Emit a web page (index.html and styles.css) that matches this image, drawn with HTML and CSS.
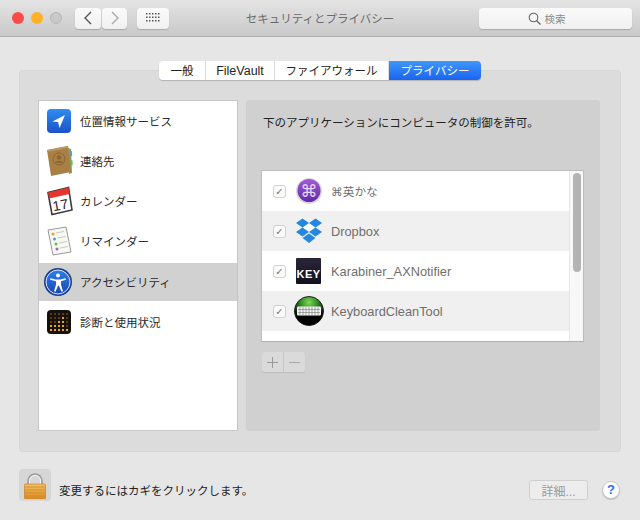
FILE: index.html
```html
<!DOCTYPE html>
<html lang="ja">
<head>
<meta charset="utf-8">
<title>セキュリティとプライバシー</title>
<link rel="stylesheet" href="styles.css">
</head>
<body>
<div class="window">
  <header class="titlebar">
    <div class="lights"><span class="light red"></span><span class="light amber"></span><span class="light off"></span></div>
    <div class="nav">
      <button class="tb-btn back"><svg width="10" height="14" viewBox="0 0 10 14"><path d="M8 1 2 7l6 6" fill="none" stroke="#555" stroke-width="1.4"/></svg></button>
      <button class="tb-btn fwd"><svg width="10" height="14" viewBox="0 0 10 14"><path d="M2 1l6 6-6 6" fill="none" stroke="#aaa" stroke-width="1.4"/></svg></button>
    </div>
    <button class="tb-btn grid"><svg width="14" height="10" viewBox="0 0 14 10" fill="#555"><rect x="0" y="0" width="1.5" height="1.5"/><rect x="3" y="0" width="1.5" height="1.5"/><rect x="6" y="0" width="1.5" height="1.5"/><rect x="9" y="0" width="1.5" height="1.5"/><rect x="12" y="0" width="1.5" height="1.5"/><rect x="0" y="3.5" width="1.5" height="1.5"/><rect x="3" y="3.5" width="1.5" height="1.5"/><rect x="6" y="3.5" width="1.5" height="1.5"/><rect x="9" y="3.5" width="1.5" height="1.5"/><rect x="12" y="3.5" width="1.5" height="1.5"/><rect x="0" y="7" width="1.5" height="1.5"/><rect x="3" y="7" width="1.5" height="1.5"/><rect x="6" y="7" width="1.5" height="1.5"/><rect x="9" y="7" width="1.5" height="1.5"/><rect x="12" y="7" width="1.5" height="1.5"/></svg></button>
    <div class="title">セキュリティとプライバシー</div>
    <div class="search"><svg width="13" height="13" viewBox="0 0 13 13"><circle cx="5.5" cy="5.5" r="4.3" fill="none" stroke="#666" stroke-width="1.1"/><path d="M8.7 8.7 12.5 12.5" stroke="#666" stroke-width="1.3"/></svg><span>検索</span></div>
  </header>

  <main class="content">
    <nav class="tabs">
      <span class="tab t1">一般</span>
      <span class="tab t2">FileVault</span>
      <span class="tab t3">ファイアウォール</span>
      <span class="tab t4 active">プライバシー</span>
    </nav>
    <section class="panel">
      <ul class="services">
        <li class="service">
          <svg class="sicon" width="26" height="26" viewBox="0 0 26 26"><defs><linearGradient id="gLoc" x1="0" y1="0" x2="0" y2="1"><stop offset="0" stop-color="#2f8df0"/><stop offset="1" stop-color="#1c52c8"/></linearGradient></defs><rect x="1" y="1" width="24" height="24" rx="4" fill="url(#gLoc)"/><path d="M19 7 6.500 13.500l5.600.6 1.400 5.900z" fill="#fff"/></svg>
          <span>位置情報サービス</span>
        </li>
        <li class="service">
          <svg class="sicon" width="28" height="32" viewBox="0 0 28 32"><path d="M22 3l3 1 1 24-3 1z" fill="#8a9a60"/><path d="M24 6l2 .3.200 5-2-.3z" fill="#5a9be0"/><path d="M24.500 15l2 .3.200 5-2-.3z" fill="#6cb84f"/><path d="M1 5 22 1l3 26-20 4z" fill="#a87f45"/><path d="M1 5 22 1l.3 2L2 7z" fill="#bc9560"/><circle cx="13" cy="14" r="6" fill="none" stroke="#8b6733" stroke-width="1"/><circle cx="13" cy="12.500" r="2.200" fill="#8b6733"/><path d="M9 18c1-3 7-3 8 0z" fill="#8b6733"/></svg>
          <span>連絡先</span>
        </li>
        <li class="service">
          <svg class="sicon" width="28" height="30" viewBox="0 0 28 30"><path d="M2 6.500 22.500 1.500l3.500 22.500-20 4.500z" fill="#fff" stroke="#3c3c3c" stroke-width="1.600"/><path d="M2 6.500 22.500 1.500l1 6.500L3.200 12.500z" fill="#e2362f"/><text x="14.500" y="24" class="calnum" text-anchor="middle" transform="rotate(-10 14 20)">17</text></svg>
          <span>カレンダー</span>
        </li>
        <li class="service">
          <svg class="sicon" width="26" height="30" viewBox="0 0 26 30"><path d="M2 4 20 1l5 25-18 3z" fill="#f8f8f2" stroke="#999" stroke-width="1"/><circle cx="7" cy="8" r="1.500" fill="#f0a030"/><circle cx="8.500" cy="13" r="1.500" fill="#4a9de8"/><circle cx="10" cy="18" r="1.500" fill="#5fbf50"/><circle cx="11" cy="23" r="1.500" fill="#a860d0"/><path d="M10 7l8-1.500M11.500 12l8-1.500M13 17l8-1.500M14 22l8-1.500" stroke="#bbb" stroke-width=".8"/></svg>
          <span>リマインダー</span>
        </li>
        <li class="service selected">
          <svg class="sicon big" width="30" height="30" viewBox="0 0 30 30"><defs><linearGradient id="gAcc" x1="0" y1="0" x2="0" y2="1"><stop offset="0" stop-color="#2f7fe8"/><stop offset="1" stop-color="#1746b8"/></linearGradient></defs><circle cx="15" cy="15" r="14" fill="#1b3f93"/><circle cx="15" cy="15" r="12" fill="url(#gAcc)" stroke="#dbe8fb" stroke-width="1"/><circle cx="15" cy="8.500" r="2" fill="#fff"/><path d="M7.500 11.300 12.500 12.500h5l5-1.200.400 1.500-4.900 1.500v3.500l2 6.500-1.500.4-2.500-6h-1l-2.500 6-1.500-.4 2-6.500v-3.500L7.100 12.800z" fill="#fff"/></svg>
          <span>アクセシビリティ</span>
        </li>
        <li class="service">
          <svg class="sicon" width="26" height="26" viewBox="0 0 26 26"><rect x="1" y="1" width="24" height="24" rx="4" fill="#17110c"/><g fill="#f0a01e"><rect x="4" y="20" width="2" height="2"/><rect x="8" y="20" width="2" height="2"/><rect x="12" y="20" width="2" height="2"/><rect x="16" y="20" width="2" height="2"/><rect x="20" y="20" width="2" height="2"/><rect x="4" y="16" width="2" height="2"/><rect x="8" y="16" width="2" height="2"/><rect x="12" y="16" width="2" height="2"/><rect x="16" y="16" width="2" height="2"/><rect x="12" y="12" width="2" height="2"/><rect x="16" y="12" width="2" height="2"/><rect x="16" y="8" width="2" height="2"/></g><g fill="#5a3a12"><rect x="4" y="12" width="2" height="2"/><rect x="8" y="12" width="2" height="2"/><rect x="20" y="12" width="2" height="2"/><rect x="20" y="16" width="2" height="2"/><rect x="4" y="8" width="2" height="2"/><rect x="8" y="8" width="2" height="2"/><rect x="12" y="8" width="2" height="2"/><rect x="20" y="8" width="2" height="2"/><rect x="4" y="4" width="2" height="2"/><rect x="8" y="4" width="2" height="2"/><rect x="12" y="4" width="2" height="2"/><rect x="16" y="4" width="2" height="2"/><rect x="20" y="4" width="2" height="2"/></g></svg>
          <span>診断と使用状況</span>
        </li>
      </ul>
      <div class="detail">
        <p class="lead">下のアプリケーションにコンピュータの制御を許可。</p>
        <div class="table">
          <ul class="apps">
            <li class="app">
              <span class="check">✓</span>
              <svg class="aicon" width="28" height="28" viewBox="0 0 28 28"><defs><linearGradient id="gEi" x1="0" y1="0" x2="0" y2="1"><stop offset="0" stop-color="#a45ad8"/><stop offset="1" stop-color="#5e2aa6"/></linearGradient></defs><circle cx="14" cy="14" r="13" fill="#d8d8d8"/><circle cx="14" cy="13.500" r="11.500" fill="url(#gEi)"/><text x="14" y="19.500" class="cmd" text-anchor="middle">⌘</text></svg>
              <span class="cjkname">⌘英かな</span>
            </li>
            <li class="app alt">
              <span class="check">✓</span>
              <svg class="aicon" width="28" height="28" viewBox="0 0 28 28" fill="#2488e0"><path d="M14 6l6.500 4.500L14 15l-6.500-4.500z" fill="#fff"/><path d="M7.500 1.500 14 6 7.500 10.500 1 6z"/><path d="M20.500 1.500 27 6l-6.500 4.500L14 6z"/><path d="M7.500 10.500 14 15l-6.500 4.500L1 15z"/><path d="M20.500 10.500 27 15l-6.500 4.500L14 15z"/><path d="M14 16.500l6.500 4.500-6.500 5-6.500-5z" /></svg>
              <span>Dropbox</span>
            </li>
            <li class="app">
              <span class="check">✓</span>
              <span class="keyicon">KEY</span>
              <span>Karabiner_AXNotifier</span>
            </li>
            <li class="app alt">
              <span class="check">✓</span>
              <svg class="aicon kb" width="30" height="30" viewBox="0 0 30 30"><defs><radialGradient id="gKb" cx=".5" cy=".2" r=".6"><stop offset="0" stop-color="#7fd65a"/><stop offset=".5" stop-color="#2f8a22"/><stop offset="1" stop-color="#0a0a0a"/></radialGradient><linearGradient id="gKb2" x1="0" y1="0" x2="0" y2="1"><stop offset="0" stop-color="#000" stop-opacity="0"/><stop offset=".5" stop-color="#000" stop-opacity="0"/><stop offset=".68" stop-color="#000"/></linearGradient></defs><circle cx="15" cy="15" r="14.500" fill="url(#gKb)" stroke="#222"/><circle cx="15" cy="15" r="14" fill="url(#gKb2)"/><rect x="3" y="10.500" width="24" height="9" rx="1" fill="#f2f2f2"/><path d="M4 13.500h22M4 16.500h22M6 11v8M9 11v8M12 11v8M15 11v8M18 11v8M21 11v8M24 11v8" stroke="#777" stroke-width=".6"/></svg>
              <span>KeyboardCleanTool</span>
            </li>
            <li class="app-tail"></li>
          </ul>
          <div class="scrolltrack"><div class="thumb"></div></div>
        </div>
        <div class="addremove">
          <span class="ar"><svg width="11" height="11" viewBox="0 0 11 11"><path d="M5.500 0v11M0 5.500h11" stroke="#999" stroke-width="1"/></svg></span>
          <span class="ar"><svg width="11" height="11" viewBox="0 0 11 11"><path d="M0 5.500h11" stroke="#a8a8a8" stroke-width="1"/></svg></span>
        </div>
      </div>
    </section>
    <footer class="footer">
      <div class="lockbox"><svg width="22" height="26" viewBox="0 0 22 26"><defs><linearGradient id="gLock" x1="0" y1="0" x2="0" y2="1"><stop offset="0" stop-color="#f4c062"/><stop offset="1" stop-color="#e08a20"/></linearGradient></defs><path d="M4 12V8a7 7 0 0 1 14 0V12" fill="none" stroke="#9c9c9c" stroke-width="1.600"/><path d="M5.500 12V8a5.500 5.500 0 0 1 11 0V12" fill="none" stroke="#f4f4f4" stroke-width="1"/><rect x="0.500" y="11" width="21" height="15" rx="1" fill="url(#gLock)" stroke="#b87a20" stroke-width=".6"/><path d="M1 14h20M1 17h20M1 20h20M1 23h20" stroke="#c8872c" stroke-width=".7"/></svg></div>
      <span class="locktext">変更するにはカギをクリックします。</span>
      <button class="details">詳細...</button>
      <span class="help">?</span>
    </footer>
  </main>
</div>
</body>
</html>
```

FILE: styles.css
```css
* { box-sizing: border-box; }
html, body { margin: 0; padding: 0; }
body { width: 640px; height: 520px; overflow: hidden; background: #e6e6e6; font-family: "Liberation Sans", "DejaVu Sans", "Noto Sans CJK JP", sans-serif; font-size: 11.5px; color: #2c2c2c; }
ul { list-style: none; margin: 0; padding: 0; }
p { margin: 0; }
button { font-family: inherit; padding: 0; margin: 0; }
.window { width: 640px; height: 520px; display: flex; flex-direction: column; }

.titlebar { height: 37px; flex: none; display: flex; align-items: center; padding-left: 12px; background: linear-gradient(#e4e4e4, #c9c9c9); border-bottom: 1px solid #aeaeae; position: relative; }
.lights { display: flex; gap: 7px; width: 63px; flex: none; }
.light { width: 12px; height: 12px; border-radius: 50%; }
.red { background: #fc4a48; }
.amber { background: #fdb126; }
.off { background: #c9c9c9; border: 1px solid #b6b6b6; }
.nav { display: flex; gap: 1px; }
.tb-btn { height: 21px; display: flex; align-items: center; justify-content: center; background: linear-gradient(#fbfbfb, #f0f0f0); border: 0; border-radius: 4px; box-shadow: 0 1px 1px #a8a8a8; }
.back { width: 26px; }
.fwd { width: 25px; }
.grid { width: 32px; margin-left: 10px; }
.title { position: absolute; left: 0; right: 0; top: 1px; text-align: center; color: #6b6b6b; font-size: 11.5px; line-height: 37px; pointer-events: none; }
.search { margin-left: auto; margin-right: 8px; width: 153px; height: 21px; padding-right: 18px; display: flex; align-items: center; justify-content: center; gap: 4px; background: linear-gradient(#fafafa, #f0f0f0); border-radius: 4px; box-shadow: 0 1px 1px #a8a8a8; color: #8c8c8c; font-size: 10.5px; }

.content { flex: 1; display: flex; flex-direction: column; padding: 24px 19px 0; position: relative; }
.tabs { position: relative; z-index: 1; align-self: center; display: flex; height: 19px; background: #fff; border-radius: 4px; box-shadow: 0 1px 1px #b4b4b4; margin-bottom: -10px; }
.tab { display: flex; align-items: center; justify-content: center; border-right: 1px solid #dcdcdc; color: #222; font-size: 11.5px; padding-bottom: 2px; }
.t1 { width: 47px; }
.t2 { width: 69px; font-size: 12.5px; padding-bottom: 0; }
.t3 { width: 114px; }
.t4 { width: 92px; }
.tab.active { background: linear-gradient(#3f97fb, #1a64f0); color: #fff; border: 0; border-radius: 0 4px 4px 0; }

.panel { height: 382px; flex: none; background: #dcdcdc; border: 1px solid #d6d6d6; border-radius: 4px; display: flex; gap: 8px; padding: 29px 20px 21px 18px; }
.services { width: 200px; height: 331px; background: #fff; border: 1px solid #c6c6c6; flex: none; }
.service { height: 40px; display: flex; align-items: center; position: relative; padding-left: 41px; font-size: 11.5px; color: #2a2a2a; }
.service.selected { background: #d1d1d1; height: 38px; margin: 2px 0 1px; }
.sicon { position: absolute; left: 7px; top: 50%; transform: translateY(-50%); }
.big { left: 4px; }
.calnum { font: 14px "Liberation Sans", sans-serif; fill: #222; }

.detail { width: 354px; height: 331px; background: #d0d0d0; border-radius: 3px; padding: 16px 16px 0 15px; display: flex; flex-direction: column; }
.lead { font-size: 11.5px; line-height: 14px; color: #222; padding-left: 2px; }
.table { margin-top: 40px; width: 323px; height: 172px; background: #fff; border: 1px solid #bdbdbd; border-bottom-color: #b0b0b0; display: flex; }
.apps { flex: 1; }
.app { height: 40px; display: flex; align-items: center; padding-left: 11px; color: #6f6f6f; font-size: 12.8px; position: relative; }
.app.alt { background: #f0f0f0; }
.app-tail { height: 10px; }
.cjkname { font-size: 11.7px; padding-bottom: 2px; }
.check { width: 13px; height: 13px; background: #fafafa; border: 1px solid #d0d0d0; border-radius: 3px; color: #777; font-size: 10px; line-height: 12px; text-align: center; flex: none; margin-right: 45px; }
.aicon { position: absolute; left: 33px; top: 50%; transform: translateY(-50%); }
.aicon.kb { left: 32px; }
.keyicon { position: absolute; left: 34px; top: 7px; width: 25px; height: 26px; background: linear-gradient(#2a2638, #131020); color: #fff; font: bold 11px/32px "Liberation Sans", sans-serif; text-align: center; border-radius: 1px; letter-spacing: .5px; }
.cmd { font: 17px "DejaVu Sans", sans-serif; fill: #e6d6f6; }
.scrolltrack { width: 14px; background: #f8f8f8; border-left: 1px solid #e6e6e6; padding: 2px 2px 0 3px; flex: none; }
.thumb { width: 8px; height: 99px; background: #b4b4b4; border-radius: 4px; }

.addremove { display: flex; margin-top: 10px; margin-left: 1px; width: 43px; height: 20px; background: #dadada; border-radius: 3px; box-shadow: 0 1px 1px #bcbcbc; }
.ar { flex: 1; display: flex; align-items: center; justify-content: center; }
.ar + .ar { border-left: 1px solid #c6c6c6; }

.footer { flex: 1; display: flex; align-items: flex-start; position: relative; padding-top: 17px; }
.lockbox { width: 32px; height: 32px; padding-top: 4px; background: #d6d6d6; border-radius: 4px; display: flex; justify-content: center; flex: none; }
.locktext { margin-left: 8px; margin-top: 15px; font-size: 11.5px; line-height: 14px; color: #222; }
.details { margin-left: auto; margin-top: 11px; width: 59px; height: 20px; background: #ededed; border: 1px solid #d0d0d0; border-radius: 3px; color: #9a9a9a; font-size: 12px; }
.help { margin-left: 14px; margin-right: 1px; margin-top: 12px; width: 18px; height: 18px; border-radius: 50%; background: #fff; border: 1px solid #c8c8c8; box-shadow: 0 1px 1px #bbb; color: #2a6fe8; font-size: 13px; font-weight: bold; line-height: 16px; text-align: center; }
```
